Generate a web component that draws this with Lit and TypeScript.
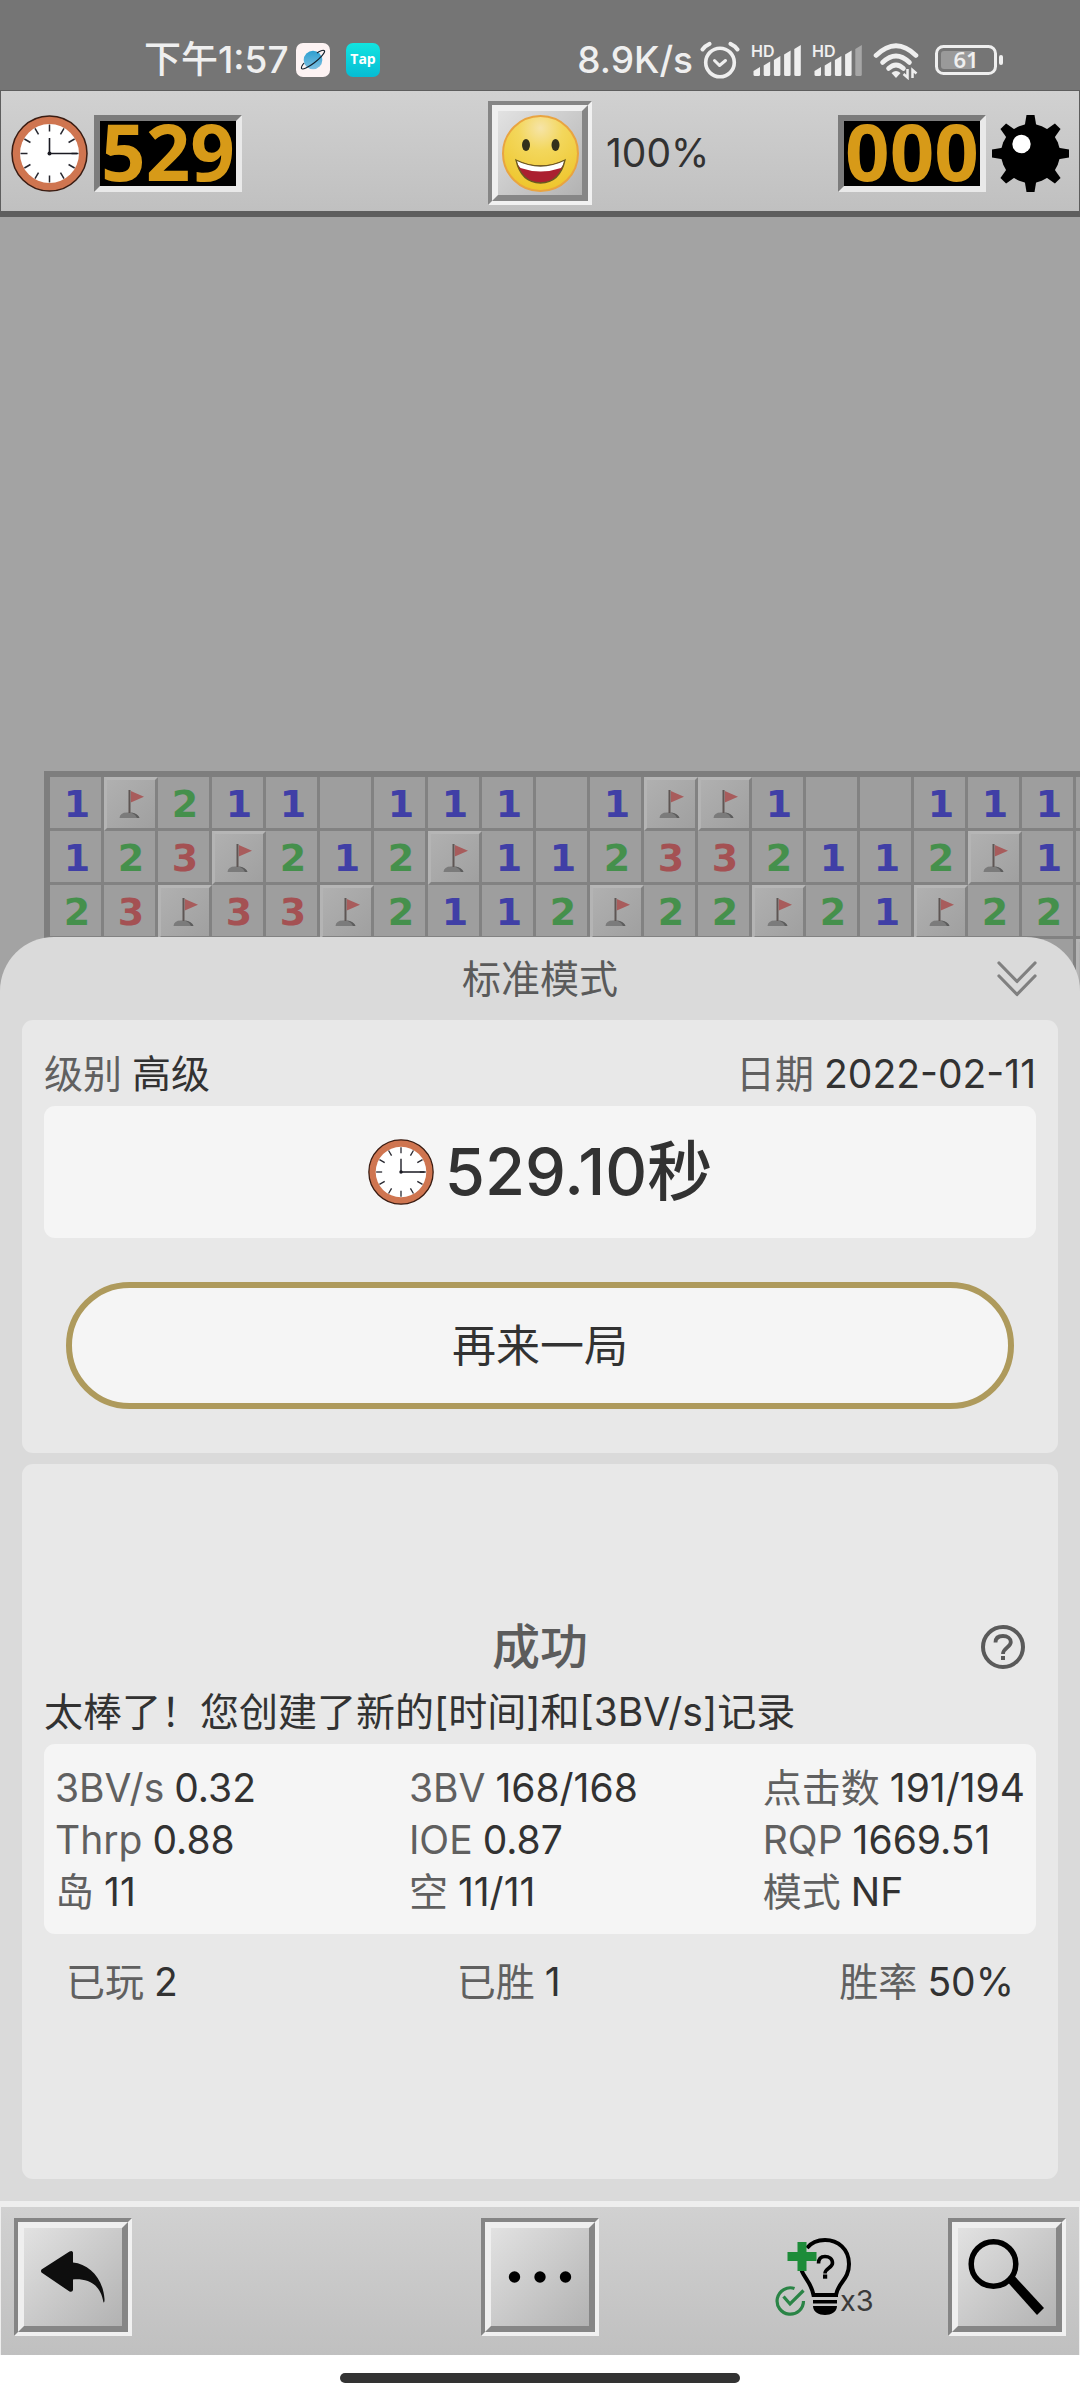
import { LitElement, css, html, svg } from "lit";
import { customElement, property } from "lit/decorators.js";

const clockIcon = html`<svg class="clock" viewBox="0 0 77 77" aria-hidden="true">
  <circle cx="38.5" cy="38.5" r="37.5" fill="#cf7550" stroke="#3a1c12" stroke-width="1.5" />
  <circle cx="38.5" cy="38.5" r="29.5" fill="#fff" />
  ${Array.from({ length: 12 }, (_, i) => svg`<line x1="38.5" y1="9.5" x2="38.5" y2="16.5"
    stroke="#26262e" stroke-width="1.5" transform="rotate(${i * 30} 38.5 38.5)" />`)}
  <path d="M38.5 23V38.5H66" fill="none" stroke="#1a1a22" stroke-width="1.6" />
  <circle cx="38.5" cy="38.5" r="2" fill="#1a1a22" />
</svg>`;

const smileyIcon = html`<svg class="smiley" viewBox="0 0 77 77" aria-hidden="true">
  <defs>
    <radialGradient id="face" cx="0.5" cy="0.16" r="0.85">
      <stop offset="0" stop-color="#f6e4a8" />
      <stop offset="0.35" stop-color="#f3d75c" />
      <stop offset="1" stop-color="#eec52a" />
    </radialGradient>
  </defs>
  <circle cx="38.5" cy="38.5" r="37.5" fill="url(#face)" stroke="#e9a440" stroke-width="2" />
  <ellipse cx="24" cy="30" rx="4" ry="6" fill="#33301c" />
  <ellipse cx="53.5" cy="30" rx="4" ry="6" fill="#33301c" />
  <path d="M14 45Q38.5 56 63 45Q58 67.500 38.500 68Q19 67.500 14 45Z" fill="#ab1f30" />
  <path d="M14 45Q38.500 57 63 45Q61.500 50 59 53Q38.500 60 18.500 53Q15.500 50 14 45Z" fill="#fff" />
  <path d="M14 45Q38.500 57 63 45Q58 67.500 38.500 68Q19 67.500 14 45Z" fill="none" stroke="#6a5a20" stroke-width="1.300" />
</svg>`;

const mineIcon = html`<svg class="mine" viewBox="0 0 77 77" aria-hidden="true">
  <circle cx="38.500" cy="38.500" r="29.500" />
  ${Array.from({ length: 8 }, (_, i) => svg`<path d="M34.500 0H42.500L44.500 12H32.500Z"
    transform="rotate(${i * 45} 38.500 38.500)" />`)}
  <circle cx="29.500" cy="29" r="9.200" fill="#fff" />
</svg>`;

const flagIcon = html`<svg class="flag" viewBox="0 0 54 54" role="img" aria-label="旗">
  <path d="M15.500 41Q16 35.500 23 35.500H28Q34 36.500 35.500 41Z" fill="#7b7b7b" />
  <path d="M27 35.500Q34 36.500 35.500 41H33Q31 37 27 35.500Z" fill="#5c5c5c" />
  <rect x="24.500" y="13" width="2" height="23" fill="#5e5654" />
  <path d="M26.800 14L40 19.800L26.800 25.500Z" fill="#a85c5c" />
</svg>`;

const planetIcon = html`<svg class="badge" viewBox="0 0 34 34" aria-hidden="true">
  <defs>
    <linearGradient id="planet" x1="0" y1="0" x2="0" y2="1">
      <stop offset="0" stop-color="#2d9fd0" />
      <stop offset="1" stop-color="#7fc0e2" />
    </linearGradient>
  </defs>
  <rect width="34" height="34" rx="7" fill="#fdf3f3" />
  <circle cx="17" cy="17" r="9.300" fill="url(#planet)" />
  <path d="M21 10Q27 6 28.500 7.800C29.500 9.500 24 15.500 18 20C12 24.500 6.500 27 5.600 25.500C5 24.500 6 22.500 8 20"
    fill="none" stroke="#14202c" stroke-width="1.200" />
</svg>`;

const tapIcon = html`<svg class="badge" viewBox="0 0 34 34" aria-hidden="true">
  <defs>
    <linearGradient id="tap" x1="0" y1="0" x2="0" y2="1">
      <stop offset="0" stop-color="#12e4e0" />
      <stop offset="1" stop-color="#06bcd4" />
    </linearGradient>
  </defs>
  <rect width="34" height="34" rx="7" fill="url(#tap)" />
  <text class="tap-text" x="17" y="21" text-anchor="middle">Tap</text>
</svg>`;

const alarmIcon = html`<svg class="alarm" viewBox="0 0 40 40" aria-hidden="true">
  <g fill="none" stroke="#efefef" stroke-linecap="round">
    <circle cx="20" cy="22.500" r="14.300" stroke-width="3.600" />
    <path d="M14.500 20.500L19.500 25.500L25.500 20.500" stroke-width="3" stroke-linejoin="round" />
    <path d="M2.500 9.500Q5.500 5.500 9.500 3.800M30.500 3.800Q34.500 5.500 37.500 9.500" stroke-width="4" />
  </g>
</svg>`;

const signalIcon = (strength: number) => html`<svg class="signal" viewBox="0 0 50 40" aria-hidden="true">
  <text class="hd-text" x="0" y="17">HD</text>
  ${[28, 22.5, 17, 11.5, 6].map((top, i) => svg`<path
    d="M${2.5 + i * 10.2} ${top + 3}L${9 + i * 10.2} ${top - 1}V34.500Q${9 + i * 10.2} 36 ${7.5 + i * 10.2} 36H${4 + i * 10.2}Q${2.5 + i * 10.2} 36 ${2.5 + i * 10.2} 34.500Z"
    fill="#efefef" opacity="${i < strength ? 1 : 0.4}" />`)}
</svg>`;

const wifiIcon = html`<svg class="wifi" viewBox="0 0 48 40" aria-hidden="true">
  <g fill="none" stroke="#efefef" stroke-width="4.600" stroke-linecap="round">
    <path d="M3 15.500Q23 -4 43 15.500" />
    <path d="M9.500 22.500Q23 9.500 36.500 22.500" />
    <path d="M15.500 28.500Q23 21.500 30.500 28.500" />
  </g>
  <path d="M18.500 33Q23 29 27.500 33L23 38Z" fill="#efefef" />
  <path d="M34.500 29V37.500L30.500 34M39.500 38V30L43.500 33.500" fill="none" stroke="#efefef" stroke-width="2.500" />
</svg>`;

const batteryIcon = html`<svg class="battery" viewBox="0 0 72 40" aria-hidden="true">
  <rect x="4.500" y="6.500" width="59" height="27" rx="7" fill="none" stroke="#efefef" stroke-width="3" />
  <rect x="9" y="11" width="33" height="18" rx="3" fill="#9a9a9a" />
  <rect x="67" y="15" width="4" height="10" rx="2" fill="#efefef" />
  <text class="battery-text" x="34" y="28" text-anchor="middle">61</text>
</svg>`;

const chevronsIcon = html`<svg class="chevrons" viewBox="0 0 42 38" aria-hidden="true">
  <path d="M3 3L21 21.500L39 3M3 16L21 34.500L39 16" fill="none" stroke="#808080"
    stroke-width="3.200" stroke-linecap="round" stroke-linejoin="round" />
</svg>`;

const helpIcon = html`<svg class="help-icon" viewBox="0 0 44 44" aria-hidden="true">
  <circle cx="22" cy="22" r="20" fill="none" stroke="#5a5a5a" stroke-width="4" />
  <path d="M14.500 17.500C14.500 12.500 18 11 22 11C26.500 11 29.800 13.500 29.800 17C29.800 22.500 22 22.500 22 29"
    fill="none" stroke="#5a5a5a" stroke-width="3.800" />
  <rect x="20" y="31" width="4" height="4" fill="#5a5a5a" />
</svg>`;

const backIcon = html`<svg class="tool-icon" viewBox="0 0 98 98" aria-hidden="true">
  <path d="M17.500 41.500Q16.500 43 17.500 44.500L45.500 63.500Q48.500 64.500 49 62V51.500C60 50.500 76 53 79.500 74.500C80.500 74.500 80.500 73 80.500 71C79 50 65 36 49 34.500V24.500Q48.500 22 45.500 23.500Z" fill="#0e0e0e" />
</svg>`;

const dotsIcon = html`<svg class="tool-icon" viewBox="0 0 98 98" aria-hidden="true">
  <circle cx="23.500" cy="49" r="5.700" /><circle cx="49" cy="49" r="5.700" /><circle cx="74.500" cy="49" r="5.700" />
</svg>`;

const zoomIcon = html`<svg class="tool-icon" viewBox="0 0 98 98" aria-hidden="true">
  <circle cx="35.500" cy="36" r="22.300" fill="none" stroke="#000" stroke-width="5.500" />
  <path d="M49.500 54L56 47.500L86 80L79 87Z" />
</svg>`;

const hintIcon = html`<svg class="hint-icon" viewBox="0 0 110 90" aria-hidden="true">
  <g transform="translate(0 6)">
  <path d="M26.500 32C29 40 36 44 38.500 57H61C63 44 74 42 74 26C74 11 63 2 50 2C42 2 36 5 32 10" fill="none" stroke="#000" stroke-width="4" />
  <path d="M37 55H63V59H37ZM38 62H62V65.500H38ZM38 68H62C62 74 56 77 50 77C44 77 38 74 38 68Z" />
  <path d="M43.500 25.500C43.500 20 46.500 18.500 50 18.500C54 18.500 57.500 20.500 57.500 25C57.500 30 50 30 50 35.500" fill="none" stroke="#000" stroke-width="3.600" />
  <rect x="48" y="36.500" width="4.200" height="4.200" />
  <path d="M22.500 4H31.500V14H41.500V23H31.500V33H22.500V23H12.500V14H22.500Z" fill="#1d8c39" />
  <path d="M19.500 50.500A13.200 13.200 0 1 0 28.500 63M8.500 58.500L15 66L28.500 52.500" fill="none" stroke="#2a8446" stroke-width="3.200" />
  <text class="hint-text" x="65" y="73">x3</text>
  </g>
</svg>`;

/** Sunken LED style counter. */
@customElement("led-counter")
class LedCounter extends LitElement {
  @property() value = "000";

  static styles = css`
    :host {
      display: flex;
      align-items: center;
      justify-content: center;
      width: 148px;
      height: 77px;
      box-sizing: border-box;
      padding-bottom: 4px;
      border: 6px solid;
      border-color: #7c7c7c #e9e9e9 #e9e9e9 #7c7c7c;
      background: #000;
      color: #d79a18;
      font: 700 78px/76px "Noto Sans", "Open Sans", sans-serif;
    }
  `;

  render() {
    return html`<span>${this.value}</span>`;
  }
}

/** Visible part of the playing field; "F" is a flag, "." an opened empty cell. */
@customElement("mine-board")
class MineBoard extends LitElement {
  static rows = [
    "1F211.111.1FF1..111.",
    "123F212F112332112F1.",
    "23F33F2112F22F21F22.",
    "...................F",
  ];

  static styles = css`
    :host {
      display: block;
      padding: 554px 0 0 44px;
      overflow: hidden;
    }
    .grid {
      display: flex;
      flex-direction: column;
      width: max-content;
      border: 6px solid #7e7e7e;
    }
    .row {
      display: flex;
    }
    .cell {
      display: flex;
      align-items: center;
      justify-content: center;
      box-sizing: border-box;
      width: 54px;
      height: 54px;
      border-right: 3px solid #828282;
      border-bottom: 3px solid #828282;
      background: #9e9e9e;
      font: 700 38px/48px "DejaVu Sans", sans-serif;
    }
    .open { padding: 3px 0 0 3px; }
    .n1 { color: #403fa6; }
    .n2 { color: #45904c; }
    .n3 { color: #a45153; }
    .flagged {
      border-top: 3px solid #b6b6b6;
      border-left: 3px solid #b4b4b4;
      background: linear-gradient(135deg, #b0b0b0, #a0a0a0);
    }
    .flag {
      flex: none;
      width: 54px;
      height: 54px;
    }
  `;

  render() {
    return html`<div class="grid">
      ${MineBoard.rows.map((row) => html`<div class="row">
        ${[...row].map((c) =>
          c === "F"
            ? html`<span class="cell flagged">${flagIcon}</span>`
            : html`<span class="cell open n${c === "." ? 0 : c}">${c === "." ? "" : c}</span>`
        )}
      </div>`)}
    </div>`;
  }
}

@customElement("app-root")
class AppRoot extends LitElement {
  static stats = [
    ["3BV/s", "0.32"], ["3BV", "168/168"], ["点击数", "191/194"],
    ["Thrp", "0.88"], ["IOE", "0.87"], ["RQP", "1669.51"],
    ["岛", "11"], ["空", "11/11"], ["模式", "NF"],
  ];

  static totals = [["已玩", "2"], ["已胜", "1"], ["胜率", "50%"]];

  static styles = css`
    :host {
      display: flex;
      flex-direction: column;
      min-height: 100vh;
      background: #a3a3a3;
      color: #323232;
      font: 400 39px/52px Inter, "Noto Sans CJK SC", sans-serif;
    }
    h1, h2, p, dl, dd, dt { margin: 0; font: inherit; }
    button {
      margin: 0;
      padding: 0;
      border: 0;
      background: none;
      color: inherit;
      font: inherit;
      cursor: pointer;
    }
    svg { display: block; flex: none; }

    .status {
      display: flex;
      align-items: center;
      justify-content: space-between;
      height: 60px;
      padding: 30px 76px 0 144px;
      background: #757575;
      color: #efefef;
      font-size: 37px;
      font-weight: 500;
    }
    .status-side { display: flex; align-items: center; gap: 11px; }
    .status-start { gap: 7px; }
    .badges { display: flex; gap: 16px; }
    .badge { width: 34px; height: 34px; }
    .alarm { width: 40px; height: 40px; margin-left: -4px; }
    .signal { width: 50px; height: 40px; }
    .wifi { width: 48px; height: 40px; }
    .battery { width: 72px; height: 40px; }
    .tap-text { font: 700 14px "Open Sans", sans-serif; fill: #fff; }
    .hd-text { font: 600 16px Inter, sans-serif; fill: #efefef; }
    .battery-text { font: 600 22px "Noto Sans", sans-serif; fill: #efefef; }

    .bar {
      display: grid;
      grid-template-columns: minmax(0, 1fr) auto minmax(0, 1fr);
      align-items: center;
      background: linear-gradient(#d1d1d1, #c0c0c0);
    }
    .header {
      padding: 10px 10px 6px;
      border: 1px solid #5e5e5e;
      border-bottom: 6px solid #5e5e5e;
    }
    .group { display: flex; align-items: center; gap: 6px; }
    .group-end { justify-content: space-between; padding-left: 14px; }
    .clock, .smiley, .mine { width: 77px; height: 77px; }

    .tile {
      display: flex;
      border: 4px solid;
      border-color: #858585 #f1f1f1 #f1f1f1 #858585;
    }
    .tile-face {
      display: grid;
      place-items: center;
      box-sizing: border-box;
      width: 96px;
      height: 96px;
      border: 6px solid;
      border-color: #efefef #868686 #868686 #efefef;
      background: linear-gradient(135deg, #e2e2e2, #b2b2b2);
    }
    .toolbar .tile-face { width: 110px; height: 110px; }

    .stage {
      display: grid;
      flex: 1;
      grid-template-columns: minmax(0, 1fr);
      overflow: hidden;
    }
    mine-board, .sheet { grid-area: 1 / 1; min-width: 0; }
    .sheet {
      z-index: 1;
      align-self: end;
      display: flex;
      flex-direction: column;
      gap: 11px;
      padding: 0 22px 22px;
      border-radius: 54px 54px 0 0;
      background: #dadada;
    }
    .sheet-head {
      display: grid;
      grid-template-columns: 1fr auto 1fr;
      align-items: center;
      height: 83px;
      margin-bottom: -11px;
      color: #5a5a5a;
    }
    .sheet-head h1 { grid-column: 2; }
    .collapse { justify-self: end; margin-right: 20px; }
    .chevrons { width: 42px; height: 38px; }

    .card {
      padding: 22px;
      border-radius: 11px;
      background: #e8e8e8;
    }
    .result { padding-bottom: 44px; }
    .line {
      display: flex;
      align-items: center;
      justify-content: space-between;
      min-height: 64px;
    }
    .label { color: #606060; }
    .panel { border-radius: 11px; background: #f5f5f5; }
    .time {
      display: flex;
      align-items: center;
      justify-content: center;
      gap: 11px;
      height: 132px;
      font-size: 65px;
      font-weight: 500;
    }
    .time .clock { width: 66px; height: 66px; }
    .again {
      display: block;
      box-sizing: border-box;
      width: calc(100% - 44px);
      height: 127px;
      margin: 44px 22px 0;
      border: 6px solid #ae9a5c;
      border-radius: 64px;
      background: #f5f5f5;
      font-size: 44px;
    }

    .summary {
      display: flex;
      flex-direction: column;
      padding-top: 149px;
      padding-bottom: 149px;
    }
    .summary-head {
      display: grid;
      grid-template-columns: 1fr auto 1fr;
      align-items: center;
      height: 67px;
      color: #5c5c5c;
    }
    .summary-head h2 { grid-column: 2; font-size: 48px; font-weight: 500; }
    .help { justify-self: end; margin-right: 11px; }
    .help-icon { width: 44px; height: 44px; }
    .stats {
      display: grid;
      grid-template-columns: 1fr 1fr auto;
      padding: 18px 11px 16px;
    }
    .stat { display: flex; gap: 10px; white-space: nowrap; }
    .totals {
      display: flex;
      align-items: center;
      justify-content: space-between;
      height: 96px;
      padding: 0 22px;
    }

    .toolbar {
      padding: 11px 13px 19px;
      border: 1px solid #eeeeee;
      border-width: 6px 1px 0;
    }
    .tool-icon { width: 98px; height: 98px; }
    .tool-start { justify-self: start; }
    .tools-end { display: flex; align-items: center; justify-content: flex-end; gap: 63px; }
    .hint-icon { width: 110px; height: 90px; }
    .hint-text { font: 400 29px Inter, sans-serif; fill: #3a3a3a; }

    .home {
      display: flex;
      align-items: center;
      justify-content: center;
      height: 45px;
      background: #fff;
    }
    .home-bar {
      width: 37%;
      height: 10px;
      border-radius: 5px;
      background: #333;
    }
  `;

  private pair([label, value]: string[]) {
    return html`<div class="stat"><dt class="label">${label}</dt><dd>${value}</dd></div>`;
  }

  render() {
    return html`
      <div class="status">
        <div class="status-side status-start">
          <span>下午1:57</span>
          <span class="badges">${planetIcon}${tapIcon}</span>
        </div>
        <div class="status-side">
          <span>8.9K/s</span>
          ${alarmIcon}${signalIcon(5)}${signalIcon(4)}${wifiIcon}${batteryIcon}
        </div>
      </div>

      <header class="bar header">
        <div class="group">${clockIcon}<led-counter value="529"></led-counter></div>
        <button class="tile" aria-label="重新开始"><span class="tile-face">${smileyIcon}</span></button>
        <div class="group group-end">
          <span>100%</span>
          <div class="group"><led-counter value="000"></led-counter>${mineIcon}</div>
        </div>
      </header>

      <main class="stage">
        <mine-board></mine-board>
        <section class="sheet">
          <div class="sheet-head">
            <h1>标准模式</h1>
            <button class="collapse" aria-label="收起">${chevronsIcon}</button>
          </div>

          <div class="card result">
            <dl class="line">
              ${this.pair(["级别", "高级"])}${this.pair(["日期", "2022-02-11"])}
            </dl>
            <div class="panel time">${clockIcon}<span>529.10秒</span></div>
            <button class="again">再来一局</button>
          </div>

          <div class="card summary">
            <div class="summary-head">
              <h2>成功</h2>
              <button class="help" aria-label="帮助">${helpIcon}</button>
            </div>
            <p class="line">太棒了！您创建了新的[时间]和[3BV/s]记录</p>
            <dl class="panel stats">${AppRoot.stats.map((s) => this.pair(s))}</dl>
            <dl class="totals">${AppRoot.totals.map((s) => this.pair(s))}</dl>
          </div>
        </section>
      </main>

      <nav class="bar toolbar">
        <button class="tile tool-start" aria-label="返回"><span class="tile-face">${backIcon}</span></button>
        <button class="tile" aria-label="更多"><span class="tile-face">${dotsIcon}</span></button>
        <div class="tools-end">
          <button aria-label="提示">${hintIcon}</button>
          <button class="tile" aria-label="缩放"><span class="tile-face">${zoomIcon}</span></button>
        </div>
      </nav>
      <div class="home"><span class="home-bar"></span></div>
    `;
  }
}
